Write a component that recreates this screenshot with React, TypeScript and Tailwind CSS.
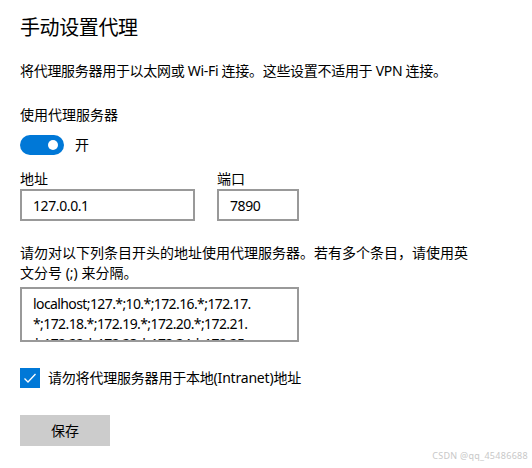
import React from 'react';

const font = { fontFamily: '"Noto Sans", "Noto Sans CJK SC", sans-serif' };

const bypassLines = [
  'localhost;127.*;10.*;172.16.*;172.17.',
  '*;172.18.*;172.19.*;172.20.*;172.21.',
  '*;172.22.*;172.23.*;172.24.*;172.25.',
];

const App = () => {
  return (
    <div className="relative w-[532px] h-[468px] bg-white text-black overflow-hidden pl-5" style={font}>
      {/* Header */}
      <h1 className="pt-[14px] text-[20px] leading-[28px] font-normal tracking-[-0.4px]">手动设置代理</h1>
      <p className="mt-[19px] text-[14px] leading-[20px] tracking-[-0.3px]">
        将代理服务器用于以太网或 Wi-Fi 连接。这些设置不适用于 VPN 连接。
      </p>

      {/* Proxy toggle */}
      <div className="mt-[24px] text-[14px] leading-[20px]">使用代理服务器</div>
      <div className="mt-[10px] flex items-center h-5">
        <div className="w-[44px] h-5 rounded-full bg-[#0078d7] flex items-center justify-end pr-[6px]">
          <div className="w-[10px] h-[10px] rounded-full bg-white" />
        </div>
        <span className="ml-[11px] text-[14px] leading-[20px]">开</span>
      </div>

      {/* Address / port */}
      <div className="mt-[14px] flex gap-[22px]">
        <div className="flex flex-col">
          <label className="text-[14px] leading-[20px]">地址</label>
          <div className="w-[175px] h-[32px] border-2 border-[#999999] flex items-center px-[11px] text-[14px] tracking-[-0.4px]">
            127.0.0.1
          </div>
        </div>
        <div className="flex flex-col">
          <label className="text-[14px] leading-[20px]">端口</label>
          <div className="w-[82px] h-[32px] border-2 border-[#999999] flex items-center px-[11px] text-[14px] tracking-[-0.4px]">
            7890
          </div>
        </div>
      </div>

      {/* Bypass list */}
      <p className="mt-[22px] w-[456px] text-[14px] leading-[20px]">
        请勿对以下列条目开头的地址使用代理服务器。若有多个条目，请使用英文分号 (;) 来分隔。
      </p>
      <div className="mt-[4px] w-[279px] h-[55px] border-2 border-[#999999] overflow-hidden pl-[11px] pt-[5px] text-[14px] leading-[20px] tracking-[-0.6px]">
        {bypassLines.map((line) => (
          <div key={line} className="whitespace-nowrap">
            {line}
          </div>
        ))}
      </div>

      {/* Local addresses checkbox */}
      <div className="mt-[26px] flex items-center h-5">
        <div className="w-5 h-5 bg-[#0078d7] flex items-center justify-center">
          <svg width="14" height="14" viewBox="0 0 14 14" fill="none">
            <path d="M1.5 7.5 L5 11 L12.5 3" stroke="white" strokeWidth="1.3" />
          </svg>
        </div>
        <span className="ml-[8px] text-[14px] leading-[20px] tracking-[-0.2px]">
          请勿将代理服务器用于本地(Intranet)地址
        </span>
      </div>

      <button className="mt-[27px] w-[90px] h-[31px] bg-[#cccccc] text-[14px] leading-[20px] text-black">
        保存
      </button>

      <div className="absolute right-[4px] bottom-[7px] text-[9px] leading-[10px] text-[#c8c8c8] tracking-[0.3px]">
        CSDN @qq_45486688
      </div>
    </div>
  );
};

export default App;
